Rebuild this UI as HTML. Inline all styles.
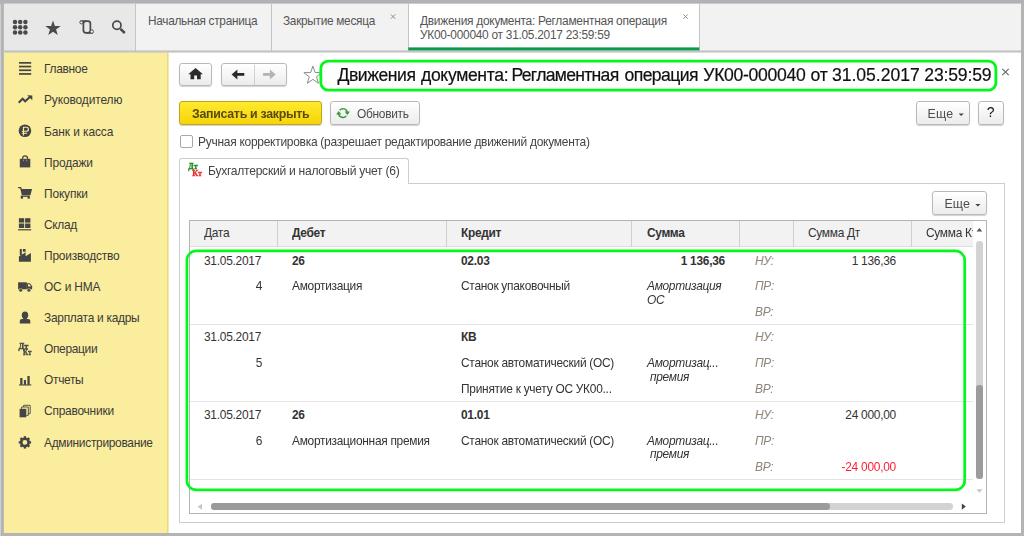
<!DOCTYPE html>
<html lang="ru">
<head>
<meta charset="utf-8">
<title>Движения документа</title>
<style>
html,body{margin:0;padding:0;}
body{width:1024px;height:536px;overflow:hidden;background:#b4b4b4;font-family:"Liberation Sans",sans-serif;font-size:12.43px;color:#333;position:relative;}
.abs{position:absolute;}
.t{margin-top:0.4px;position:absolute;white-space:nowrap;line-height:14px;transform:scaleX(0.96);transform-origin:0 50%;}
#win{left:3px;top:3px;width:1018px;height:530px;background:#fff;overflow:hidden;}
#in{left:0.5px;top:0.5px;width:1017px;height:529.5px;filter:blur(0.3px);}
/* top bar */
#topl{left:0;top:0;width:132px;height:48px;background:#e8e8e8;}
#tabs{left:132px;top:0;width:885px;height:48px;background:#f2f2f2;}
.vsep{position:absolute;top:0;width:1px;height:48px;background:#c4c4c4;}
#topline{left:0;top:46.5px;width:1017px;height:2px;background:linear-gradient(#d2d2d2,#bfbfbf);}
#acttab{left:404.5px;top:0;width:291px;height:48px;background:#fff;}
#actline{left:404.5px;top:44px;width:292px;height:3px;background:#0a9a4a;}
/* sidebar */
#side{left:0;top:48px;width:164px;height:481px;background:#fbed9e;}
.si{margin-top:0.4px;transform:scaleX(0.96);transform-origin:0 50%;position:absolute;left:40.9px;font-size:12.43px;color:#3a3a3a;white-space:nowrap;line-height:14px;}
/* buttons */
.btn{position:absolute;box-sizing:border-box;border:1px solid #b9b9b9;border-radius:3px;background:linear-gradient(#ffffff,#ececec);box-shadow:0 1px 1px rgba(0,0,0,0.18);}
.ybtn{position:absolute;box-sizing:border-box;border:1px solid #c2a51e;border-radius:3px;background:linear-gradient(#ffea2c,#f6d40a);box-shadow:0 1px 1px rgba(0,0,0,0.18);}
.hdr{position:absolute;top:0;height:26.5px;background:#f2f2f2;border-right:1px solid #cfcfcf;box-sizing:border-box;}
.ht{margin-top:0.4px;transform:scaleX(0.96);transform-origin:0 50%;position:absolute;top:217px;font-size:12.43px;line-height:14px;white-space:nowrap;color:#333;}
.c{margin-top:0.4px;transform:scaleX(0.96);transform-origin:0 50%;position:absolute;white-space:nowrap;line-height:14px;font-size:12.43px;color:#333;}
.b{font-weight:bold;}
.i{font-style:italic;}
.g{color:#8d8577;font-style:italic;}
.r{text-align:right;transform-origin:100% 50%;}
.rowsep{position:absolute;left:186px;width:783.5px;height:1px;background:#e3e3e3;}
</style>
</head>
<body>
<div class="abs" style="left:0;top:0;width:1.2px;height:536px;background:#cfcfcf"></div>
<div class="abs" style="left:0;top:0;width:1024px;height:3.5px;background:#b0b2b5"></div>
<div id="win" class="abs">
<div class="abs" style="left:0;top:0;width:1018px;height:1px;background:#c9cacc"></div>
<div class="abs" style="left:0;top:0;width:1px;height:530px;background:#bcb9ad"></div>
<div class="abs" style="left:0;top:0;width:1px;height:49px;background:#bababa"></div>
<div id="in" class="abs">
  <!-- top bar -->
  <div id="topl" class="abs"></div>
  <div id="tabs" class="abs"></div>
  <div class="vsep" style="left:131.5px"></div>
  <div class="vsep" style="left:267px"></div>
  <div id="acttab" class="abs"></div>
  <div class="vsep" style="left:404px"></div>
  <div class="vsep" style="left:695.5px"></div>
  <div class="t" style="left:144.5px;top:10.5px;font-size:12.32px;color:#555;letter-spacing:-0.294px">Начальная страница</div>
  <div class="t" style="left:279.5px;top:10.5px;font-size:12.32px;color:#555;letter-spacing:-0.296px">Закрытие месяца</div>
  <div class="t" style="left:416.5px;top:10.5px;font-size:12.45px;color:#555;letter-spacing:-0.291px">Движения документа: Регламентная операция</div>
  <div class="t" style="left:416.5px;top:24.5px;font-size:12.38px;color:#555;letter-spacing:-0.270px">УК00-000040 от 31.05.2017 23:59:59</div>

  <!-- sidebar -->
  <div id="side" class="abs"></div>
  <div class="si" style="top:58.5px;letter-spacing:-0.301px">Главное</div>
  <div class="si" style="top:89.6px;letter-spacing:-0.115px">Руководителю</div>
  <div class="si" style="top:120.7px;letter-spacing:-0.079px">Банк и касса</div>
  <div class="si" style="top:151.8px;letter-spacing:-0.138px">Продажи</div>
  <div class="si" style="top:182.9px;letter-spacing:-0.153px">Покупки</div>
  <div class="si" style="top:214px;letter-spacing:-0.319px">Склад</div>
  <div class="si" style="top:245.1px;letter-spacing:-0.204px">Производство</div>
  <div class="si" style="top:276.2px;letter-spacing:-0.190px">ОС и НМА</div>
  <div class="si" style="top:307.3px;letter-spacing:-0.288px">Зарплата и кадры</div>
  <div class="si" style="top:338.4px;letter-spacing:-0.322px">Операции</div>
  <div class="si" style="top:369.5px;letter-spacing:-0.318px">Отчеты</div>
  <div class="si" style="top:400.6px;letter-spacing:-0.227px">Справочники</div>
  <div class="si" style="top:431.7px;letter-spacing:-0.309px">Администрирование</div>

  <!-- nav buttons -->
  <div class="btn" style="left:175.5px;top:59px;width:33px;height:23px"></div>
  <div class="btn" style="left:217.5px;top:59px;width:66px;height:23px"></div>
  <div class="abs" style="left:250.5px;top:61px;width:1px;height:20px;background:#cfcfcf"></div>

  <!-- title -->
  <div class="abs" style="white-space:nowrap;left:334.5px;top:61.9px;width:660px;height:20px;font-size:17.6px;line-height:20px;color:#111;-webkit-text-stroke:0.2px #111"><span class="abs" style="left:-0.5px;top:0;letter-spacing:-0.465px">Движения</span><span class="abs" style="left:83px;top:0;letter-spacing:-0.344px">документа:</span><span class="abs" style="left:173.5px;top:0;letter-spacing:-0.710px">Регламентная</span><span class="abs" style="left:286.5px;top:0;letter-spacing:-0.576px">операция</span><span class="abs" style="left:365.25px;top:0;letter-spacing:-0.301px">УК00-000040</span><span class="abs" style="left:472.5px;top:0;letter-spacing:-0.234px">от</span><span class="abs" style="left:494px;top:0;letter-spacing:-0.031px">31.05.2017</span><span class="abs" style="left:586.25px;top:0;letter-spacing:-0.156px">23:59:59</span></div>

  <!-- command bar -->
  <div class="ybtn" style="left:175.5px;top:97px;width:143px;height:24px"></div>
  <div class="t b" style="left:188px;top:103px;font-size:12.92px;color:#5a4a12;letter-spacing:-0.315px">Записать и закрыть</div>
  <div class="btn" style="left:326.5px;top:97px;width:89.5px;height:24px"></div>
  <div class="t" style="left:353px;top:103px;font-size:12.43px;color:#4d4d4d;letter-spacing:-0.312px">Обновить</div>
  <div class="btn" style="left:912px;top:97px;width:54px;height:24px"></div>
  <div class="t" style="transform:none;left:924.1px;top:103.1px;font-size:12.4px;letter-spacing:0.2px;color:#4d4d4d">Еще</div>
  <div class="btn" style="left:974.5px;top:97px;width:26px;height:24px"></div>
  <div class="t" style="transform:none;left:983.3px;top:101.5px;font-size:14px;color:#111">?</div>

  <!-- checkbox -->
  <div class="abs" style="left:176.5px;top:131.5px;width:13px;height:13px;box-sizing:border-box;border:1px solid #a8a8a8;border-radius:2px;background:#fff"></div>
  <div class="t" style="left:194.5px;top:131.2px;font-size:12.49px;color:#444;letter-spacing:-0.287px">Ручная корректировка (разрешает редактирование движений документа)</div>

  <!-- tab page -->
  <div class="abs" style="left:175.5px;top:179px;width:825.5px;height:340px;box-sizing:border-box;border:1px solid #cdcdcd;background:#fff"></div>
  <div class="abs" style="left:175.5px;top:154px;width:230px;height:26px;box-sizing:border-box;border:1px solid #cdcdcd;border-bottom:none;border-radius:3px 3px 0 0;background:#fff"></div>
  <div class="t" style="left:204.3px;top:159.8px;font-size:12.59px;color:#444;letter-spacing:-0.272px">Бухгалтерский и налоговый учет (6)</div>

  <!-- inner Еще -->
  <div class="btn" style="left:928.5px;top:187.5px;width:55px;height:24px"></div>
  <div class="t" style="transform:none;left:940.9px;top:193.6px;font-size:12.4px;letter-spacing:0.2px;color:#4d4d4d">Еще</div>

  <!-- table -->
  <div class="abs" style="left:185.5px;top:216px;width:798px;height:294.5px;box-sizing:border-box;border:1px solid #b4b4b4;background:#fff"></div>
  <div class="abs" style="left:186.5px;top:217px;width:783px;height:26.5px;background:#f2f2f2;border-bottom:1px solid #dedede;box-sizing:border-box"></div>
  <div class="abs" style="left:273px;top:217px;width:1px;height:26px;background:#cfcfcf"></div>
  <div class="abs" style="left:442px;top:217px;width:1px;height:26px;background:#cfcfcf"></div>
  <div class="abs" style="left:627px;top:217px;width:1px;height:26px;background:#cfcfcf"></div>
  <div class="abs" style="left:735.5px;top:217px;width:1px;height:26px;background:#cfcfcf"></div>
  <div class="abs" style="left:789.5px;top:217px;width:1px;height:26px;background:#cfcfcf"></div>
  <div class="abs" style="left:907px;top:217px;width:1px;height:26px;background:#cfcfcf"></div>
  <div class="ht" style="left:200.5px;top:221.8px;letter-spacing:-0.305px">Дата</div>
  <div class="ht b" style="left:288.5px;top:221.8px;letter-spacing:-0.322px">Дебет</div>
  <div class="ht b" style="left:457.5px;top:221.8px;letter-spacing:-0.323px">Кредит</div>
  <div class="ht b" style="left:643px;top:221.8px;letter-spacing:-0.362px">Сумма</div>
  <div class="ht" style="left:804.5px;top:221.8px;letter-spacing:-0.314px">Сумма Дт</div>
  <div class="abs" style="left:922px;top:221.8px;width:47.5px;height:16px;overflow:hidden"><div class="ht" style="left:0;top:0;letter-spacing:-0.307px">Сумма Кт</div></div>

  <div class="rowsep" style="top:320.3px"></div>
  <div class="rowsep" style="top:397.7px"></div>
  <div class="rowsep" style="top:475.2px"></div>

  <!-- row 1 -->
  <div class="c" style="left:200.7px;top:249.7px;letter-spacing:-0.276px">31.05.2017</div>
  <div class="c b" style="left:288.5px;top:249.7px;letter-spacing:-0.307px">26</div>
  <div class="c b" style="left:457.5px;top:249.7px;letter-spacing:-0.276px">02.03</div>
  <div class="c b r" style="left:621px;width:100px;top:249.7px;letter-spacing:-0.268px">1 136,36</div>
  <div class="c g" style="left:751px;top:249.7px;letter-spacing:-0.297px">НУ:</div>
  <div class="c r" style="left:792px;width:100px;top:249.7px;letter-spacing:-0.268px">1 136,36</div>
  <div class="c r" style="left:158.5px;width:100px;top:275.5px;letter-spacing:-0.307px">4</div>
  <div class="c" style="left:288.5px;top:275.5px;letter-spacing:-0.308px">Амортизация</div>
  <div class="c" style="left:457.5px;top:275.5px;letter-spacing:-0.293px">Станок упаковочный</div>
  <div class="c i" style="left:643px;top:275.5px;letter-spacing:-0.327px">Амортизация</div>
  <div class="c i" style="left:643px;top:289.2px;letter-spacing:-0.414px">ОС</div>
  <div class="c g" style="left:751px;top:275.5px;letter-spacing:-0.305px">ПР:</div>
  <div class="c g" style="left:751px;top:301.3px;letter-spacing:-0.294px">ВР:</div>

  <!-- row 2 -->
  <div class="c" style="left:200.7px;top:326.5px;letter-spacing:-0.276px">31.05.2017</div>
  <div class="c b" style="left:457.5px;top:326.5px;letter-spacing:-0.367px">КВ</div>
  <div class="c g" style="left:751px;top:326.5px;letter-spacing:-0.297px">НУ:</div>
  <div class="c r" style="left:158.5px;width:100px;top:352.5px;letter-spacing:-0.307px">5</div>
  <div class="c" style="left:457.5px;top:352.5px;letter-spacing:-0.285px">Станок автоматический (ОС)</div>
  <div class="c i" style="left:643px;top:352.5px;letter-spacing:-0.288px">Амортизац...</div>
  <div class="c i" style="left:646.5px;top:366.2px;letter-spacing:-0.315px">премия</div>
  <div class="c g" style="left:751px;top:352.5px;letter-spacing:-0.305px">ПР:</div>
  <div class="c" style="left:457.5px;top:378.5px;letter-spacing:-0.270px">Принятие к учету ОС УК00...</div>
  <div class="c g" style="left:751px;top:378.5px;letter-spacing:-0.294px">ВР:</div>

  <!-- row 3 -->
  <div class="c" style="left:200.7px;top:404px;letter-spacing:-0.276px">31.05.2017</div>
  <div class="c b" style="left:288.5px;top:404px;letter-spacing:-0.307px">26</div>
  <div class="c b" style="left:457.5px;top:404px;letter-spacing:-0.276px">01.01</div>
  <div class="c g" style="left:751px;top:404px;letter-spacing:-0.297px">НУ:</div>
  <div class="c r" style="left:792px;width:100px;top:404px;letter-spacing:-0.272px">24 000,00</div>
  <div class="c r" style="left:158.5px;width:100px;top:429.8px;letter-spacing:-0.307px">6</div>
  <div class="c" style="left:288.5px;top:429.8px;letter-spacing:-0.303px">Амортизационная премия</div>
  <div class="c" style="left:457.5px;top:429.8px;letter-spacing:-0.285px">Станок автоматический (ОС)</div>
  <div class="c i" style="left:643px;top:429.8px;letter-spacing:-0.288px">Амортизац...</div>
  <div class="c i" style="left:646.5px;top:443.5px;letter-spacing:-0.315px">премия</div>
  <div class="c g" style="left:751px;top:429.8px;letter-spacing:-0.305px">ПР:</div>
  <div class="c g" style="left:751px;top:455.8px;letter-spacing:-0.294px">ВР:</div>
  <div class="c r" style="left:792px;width:100px;top:455.8px;color:#ff2036;letter-spacing:-0.264px">-24 000,00</div>

  <!-- scrollbars -->
  <div class="abs" style="left:972.7px;top:237.5px;width:6.6px;height:238px;border-radius:3.3px;background:#d3d3d3"></div>
  <div class="abs" style="left:972.7px;top:381px;width:6.6px;height:94.5px;border-radius:3.3px;background:#9b9b9b"></div>
  <div class="abs" style="left:207px;top:499.8px;width:742px;height:6.6px;border-radius:3.3px;background:#d3d3d3"></div>
  <div class="abs" style="left:207px;top:499.8px;width:619.5px;height:6.6px;border-radius:3.3px;background:#9b9b9b"></div>

</div>
  <!-- overlay svg: icons + green highlights -->
  <svg class="abs" style="left:0;top:0" width="1018" height="530" viewBox="3 3 1018 530">
    <rect x="3" y="50.4" width="1018" height="2.2" fill="#c4c4c4"/>
    <rect x="408.3" y="47.4" width="291" height="3" fill="#0a9a4a"/>
    <circle cx="15.0" cy="22.1" r="2.25" fill="#4a4a4a"/>
    <circle cx="20.2" cy="22.1" r="2.25" fill="#4a4a4a"/>
    <circle cx="25.4" cy="22.1" r="2.25" fill="#4a4a4a"/>
    <circle cx="15.0" cy="27.3" r="2.25" fill="#4a4a4a"/>
    <circle cx="20.2" cy="27.3" r="2.25" fill="#4a4a4a"/>
    <circle cx="25.4" cy="27.3" r="2.25" fill="#4a4a4a"/>
    <circle cx="15.0" cy="32.5" r="2.25" fill="#4a4a4a"/>
    <circle cx="20.2" cy="32.5" r="2.25" fill="#4a4a4a"/>
    <circle cx="25.4" cy="32.5" r="2.25" fill="#4a4a4a"/>
    <polygon points="53.00,20.40 54.88,25.91 60.70,26.00 56.04,29.49 57.76,35.05 53.00,31.70 48.24,35.05 49.96,29.49 45.30,26.00 51.12,25.91" fill="#4a4a4a"/>
    <rect x="83.4" y="21.2" width="7" height="11.7" rx="2.6" fill="none" stroke="#4a4a4a" stroke-width="1.7"/>
    <path d="M80.5 21.2H86" stroke="#4a4a4a" stroke-width="1.7" fill="none"/>
    <path d="M87 32.9H92.5" stroke="#4a4a4a" stroke-width="1.7" fill="none"/>
    <circle cx="81.3" cy="22.4" r="1.5" fill="#f4f4f4" stroke="#4a4a4a" stroke-width="1"/>
    <circle cx="91.8" cy="31.6" r="1.7" fill="#f4f4f4" stroke="#4a4a4a" stroke-width="1"/>
    <circle cx="116.9" cy="25.3" r="4.1" fill="none" stroke="#4a4a4a" stroke-width="1.7"/>
    <path d="M120.4 28.9L124.8 33" stroke="#4a4a4a" stroke-width="2.6" stroke-linecap="butt"/>
    <path d="M390.90000000000003 14.400000000000002L395.3 18.8M395.3 14.400000000000002L390.90000000000003 18.8" stroke="#8e8e8e" stroke-width="1" fill="none"/>
    <path d="M683.4 14.400000000000002L687.8000000000001 18.8M687.8000000000001 14.400000000000002L683.4 18.8" stroke="#8e8e8e" stroke-width="1" fill="none"/>
    <path d="M1002.3 68.8L1008.7 75.2M1008.7 68.8L1002.3 75.2" stroke="#6a6a6a" stroke-width="1.2" fill="none"/>
    <rect x="167.3" y="52.5" width="1.2" height="481" fill="#e4d16c"/>
    <rect x="19" y="62.0" width="12.2" height="1.7" fill="#454545"/>
    <rect x="19" y="65.7" width="12.2" height="1.7" fill="#454545"/>
    <rect x="19" y="69.4" width="12.2" height="1.7" fill="#454545"/>
    <rect x="19" y="73.1" width="12.2" height="1.7" fill="#454545"/>
    <polyline points="18.7,102.7 22.6,98.7 25.2,101.3 30.4,96.4" fill="none" stroke="#454545" stroke-width="2"/>
    <polygon points="27.2,95.3 32.3,95.4 32.3,100.3" fill="#454545"/>
    <circle cx="24.95" cy="130.7" r="6.3" fill="#454545"/>
    <path d="M23.5 135.4V127.2H26.4A2 2 0 0 1 26.4 131.2H21.9M21.9 133.2H27.1" fill="none" stroke="#fbed9e" stroke-width="1.15"/>
    <rect x="19.8" y="158.8" width="10.5" height="8.6" fill="#454545"/>
    <path d="M22.6 160.5V158.4A2.45 2.6 0 0 1 27.5 158.4V160.5" fill="none" stroke="#454545" stroke-width="1.3"/>
    <rect x="22.9" y="159.6" width="0.8" height="1.6" fill="#fbed9e" opacity="0.6"/>
    <rect x="26.4" y="159.6" width="0.8" height="1.6" fill="#fbed9e" opacity="0.6"/>
    <path d="M18.1 187.6H20.6L21.4 189.3" fill="none" stroke="#454545" stroke-width="1.2"/>
    <polygon points="20.4,188.9 32.1,188.9 30.4,195.2 21.8,195.2" fill="#454545"/>
    <rect x="20.8" y="195.6" width="9" height="1.3" fill="#454545"/>
    <rect x="20.8" y="196.3" width="2.2" height="2.4" fill="#454545"/>
    <rect x="27.6" y="196.3" width="2.2" height="2.4" fill="#454545"/>
    <rect x="18.9" y="218.2" width="5.3" height="4.4" fill="#454545"/>
    <rect x="18.9" y="223.5" width="5.3" height="4.5" fill="#454545"/>
    <rect x="25.1" y="218.2" width="5.3" height="4.4" fill="#454545"/>
    <rect x="25.1" y="223.5" width="5.3" height="4.5" fill="#454545"/>
    <rect x="18.1" y="229.2" width="13.1" height="1.2" fill="#454545"/>
    <polygon points="18.9,261.7 18.9,256.4 25.6,252.3 25.6,256.3 30.9,253.1 30.9,261.7" fill="#454545"/>
    <rect x="19.8" y="249" width="2" height="6.4" fill="#454545"/>
    <rect x="22.9" y="249" width="2.7" height="2.7" fill="#454545"/>
    <rect x="18.1" y="282.3" width="8.7" height="7" fill="#454545"/>
    <path d="M26.6 283.3H30L32.1 286.3V289.3H26.6Z" fill="#454545"/><path d="M28 284.3H29.6L30.9 286.5H28Z" fill="#fbed9e"/>
    <circle cx="20.7" cy="290.3" r="1.8" fill="#454545" stroke="#fbed9e" stroke-width="0.5"/>
    <circle cx="28.9" cy="290.3" r="1.8" fill="#454545" stroke="#fbed9e" stroke-width="0.5"/>
    <ellipse cx="25" cy="315.2" rx="3.2" ry="3.7" fill="#454545"/><rect x="23.4" y="317" width="3.2" height="3" fill="#454545"/>
    <path d="M19.8 323.6V321Q19.8 319.2 22 319.1H28Q30.3 319.2 30.3 321V323.6Z" fill="#454545"/>
    <text x="18.5" y="348.5" font-family="Liberation Serif" font-weight="bold" font-size="8.2" textLength="10" lengthAdjust="spacingAndGlyphs" stroke="#454545" stroke-width="0.35" fill="#454545">Дт</text>
    <text x="23" y="355.1" font-family="Liberation Serif" font-weight="bold" font-size="8.2" textLength="8.4" lengthAdjust="spacingAndGlyphs" stroke="#454545" stroke-width="0.35" fill="#454545">Кт</text>
    <rect x="20.2" y="378" width="2.3" height="6.8" fill="#454545"/>
    <rect x="23.9" y="380" width="2.1" height="4.8" fill="#454545"/>
    <rect x="27.4" y="376" width="2.3" height="8.8" fill="#454545"/>
    <rect x="19" y="384.4" width="12.3" height="1.1" fill="#454545"/>
    <rect x="19.6" y="408.8" width="6.7" height="8.5" fill="#454545"/>
    <path d="M21.6 408.8V407H28.3V415.4H26.3" fill="none" stroke="#454545" stroke-width="0.9"/>
    <path d="M23.6 407V405.3H30.2V413.6H28.3" fill="none" stroke="#454545" stroke-width="0.9"/>
    <circle cx="24.9" cy="442.4" r="3.7" fill="none" stroke="#454545" stroke-width="2.6"/>
    <rect x="23.75" y="436.2" width="2.3" height="2.2" fill="#454545" transform="rotate(0 24.9 442.4)"/>
    <rect x="23.75" y="436.2" width="2.3" height="2.2" fill="#454545" transform="rotate(45 24.9 442.4)"/>
    <rect x="23.75" y="436.2" width="2.3" height="2.2" fill="#454545" transform="rotate(90 24.9 442.4)"/>
    <rect x="23.75" y="436.2" width="2.3" height="2.2" fill="#454545" transform="rotate(135 24.9 442.4)"/>
    <rect x="23.75" y="436.2" width="2.3" height="2.2" fill="#454545" transform="rotate(180 24.9 442.4)"/>
    <rect x="23.75" y="436.2" width="2.3" height="2.2" fill="#454545" transform="rotate(225 24.9 442.4)"/>
    <rect x="23.75" y="436.2" width="2.3" height="2.2" fill="#454545" transform="rotate(270 24.9 442.4)"/>
    <rect x="23.75" y="436.2" width="2.3" height="2.2" fill="#454545" transform="rotate(315 24.9 442.4)"/>
    <polygon points="195.6,68 203,74.3 188.2,74.3" fill="#2b2b2b"/>
    <path d="M190.5 73.5H200.7V79.2H197V75.6H194.2V79.2H190.5Z" fill="#2b2b2b"/>
    <polygon points="231.6,74.4 237.4,69.4 237.4,79.4" fill="#2b2b2b"/>
    <rect x="236.5" y="73" width="7.8" height="2.8" fill="#2b2b2b"/>
    <polygon points="275.7,74.4 269.9,69.4 269.9,79.4" fill="#b3b3b3"/>
    <rect x="263" y="73" width="7.8" height="2.8" fill="#b3b3b3"/>
    <polygon points="312.90,66.10 315.13,72.53 321.94,72.66 316.51,76.77 318.48,83.29 312.90,79.40 307.32,83.29 309.29,76.77 303.86,72.66 310.67,72.53" fill="#fff" stroke="#8a8a8a" stroke-width="1"/>
    <rect x="320.8" y="60.9" width="14" height="29.1" rx="7" fill="#fff"/>
    <rect x="320.8" y="61.1" width="675.1" height="29.1" rx="7.5" fill="none" stroke="#04f71a" stroke-width="2.8"/>
    <rect x="186.9" y="250.8" width="777.8" height="239.1" rx="9.5" fill="none" stroke="#04f71a" stroke-width="2.7"/>
    <path d="M339.7 110.3A4.3 4.3 0 0 1 347.3 112.4" fill="none" stroke="#3c9a3c" stroke-width="1.5"/>
    <polygon points="344.7,111.6 349.9,111.6 347.3,115.2" fill="#3c9a3c"/>
    <path d="M346.3 115.9A4.3 4.3 0 0 1 338.7 113.8" fill="none" stroke="#3c9a3c" stroke-width="1.5"/>
    <polygon points="336.1,114.6 341.3,114.6 338.7,111" fill="#3c9a3c"/>
    <polygon points="958.6,113.5 963.8,113.5 961.2,116.1" fill="#444"/>
    <polygon points="975.3,204 980.5,204 977.9,206.6" fill="#444"/>
    <polygon points="976.5,231.6 982.3,231.6 979.4,228" fill="#555"/>
    <polygon points="976.4,489.2 982.6,489.2 979.5,492.7" fill="#c6c6c6"/>
    <polygon points="202,503.7 202,509.7 197.6,506.7" fill="#c6c6c6"/>
    <polygon points="961.8,503.5 961.8,509.8 965.8,506.6" fill="#444"/>
    <text x="188.2" y="169.3" font-family="Liberation Serif" font-weight="bold" font-size="8.2" textLength="9.4" lengthAdjust="spacingAndGlyphs" stroke="#1c8c1c" stroke-width="0.35" fill="#1c8c1c">Дт</text>
    <text x="192.3" y="176.2" font-family="Liberation Serif" font-weight="bold" font-size="8.2" textLength="9.6" lengthAdjust="spacingAndGlyphs" stroke="#ee2a2e" stroke-width="0.35" fill="#ee2a2e">Кт</text>
  </svg>
</div>
</body>
</html>
